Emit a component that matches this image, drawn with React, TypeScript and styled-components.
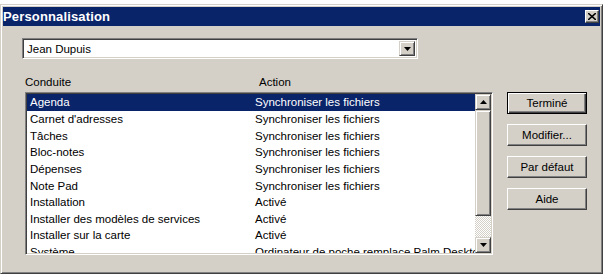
import React from "react";
import styled, { createGlobalStyle } from "styled-components";

const GlobalStyle = createGlobalStyle`
  html, body {
    margin: 0;
    padding: 0;
    background: #ffffff;
  }
  body {
    font-family: "Liberation Sans", Arial, sans-serif;
    font-size: 11.5px;
    color: #000;
  }
`;

const Window = styled.div`
  margin-top: 4px;
  width: 603px;
  height: 270px;
  box-sizing: border-box;
  background: #d4d0c8;
  border: 1px solid;
  border-color: #d4d0c8 #404040 #404040 #d4d0c8;
  box-shadow: inset 1px 1px #ffffff, inset -1px -1px #808080;
  padding: 2px;
  display: flex;
  flex-direction: column;
`;

const TitleBar = styled.div`
  height: 19px;
  background: #0a246a;
  display: flex;
  align-items: center;
  justify-content: space-between;
  padding: 0 1px 0 0;
`;

const Title = styled.span`
  color: #fff;
  font-weight: bold;
  font-size: 13px;
  letter-spacing: 0.15px;
`;

const CloseButton = styled.div`
  width: 12px;
  height: 11px;
  background: #d4d0c8;
  border: 1px solid;
  border-color: #ffffff #404040 #404040 #ffffff;
  box-shadow: inset -1px -1px #808080;
  display: flex;
  align-items: center;
  justify-content: center;
`;

const Content = styled.div`
  flex: 1;
  padding: 12px 0 0 19px;
  display: flex;
  flex-direction: column;
`;

const Sunken = styled.div`
  box-sizing: border-box;
  background: #fff;
  border: 1px solid;
  border-color: #808080 #ffffff #ffffff #808080;
  box-shadow: inset 1px 1px #404040, inset -1px -1px #d4d0c8;
  padding: 1px;
`;

const Combo = styled(Sunken)`
  width: 396px;
  height: 21px;
  display: flex;
  align-items: center;
  justify-content: space-between;
  padding: 2px 2px 2px 4px;
`;

const ArrowButton = styled.div<{ $h?: number }>`
  box-sizing: border-box;
  width: 16px;
  height: ${(p) => p.$h ?? 16}px;
  background: #d4d0c8;
  border: 1px solid;
  border-color: #d4d0c8 #404040 #404040 #d4d0c8;
  box-shadow: inset 1px 1px #ffffff, inset -1px -1px #808080;
  display: flex;
  align-items: center;
  justify-content: center;
  flex-shrink: 0;
`;

const Main = styled.div`
  display: flex;
  margin-top: 13px;
`;

const LeftColumn = styled.div`
  margin-left: 3px;
  width: 468px;
  display: flex;
  flex-direction: column;
`;

const Labels = styled.div`
  display: flex;
  height: 20px;
  align-items: center;
`;

const Label = styled.span<{ $w?: number }>`
  width: ${(p) => (p.$w ? `${p.$w}px` : "auto")};
`;

const ListBox = styled(Sunken)`
  height: 163px;
  display: flex;
`;

const Rows = styled.div`
  flex: 1;
  overflow: hidden;
  min-width: 0;
`;

const Row = styled.div<{ $selected?: boolean }>`
  height: 16.65px;
  display: flex;
  align-items: center;
  white-space: nowrap;
  background: ${(p) => (p.$selected ? "#0a246a" : "transparent")};
  color: ${(p) => (p.$selected ? "#fff" : "#000")};
`;

const Cell = styled.span<{ $w?: number }>`
  padding-left: 3px;
  width: ${(p) => (p.$w ? `${p.$w}px` : "auto")};
  flex-shrink: 0;
`;

const ScrollBar = styled.div`
  width: 16px;
  display: flex;
  flex-direction: column;
`;

const Thumb = styled.div`
  box-sizing: border-box;
  height: 106px;
  background: #d4d0c8;
  border: 1px solid;
  border-color: #d4d0c8 #404040 #404040 #d4d0c8;
  box-shadow: inset 1px 1px #ffffff, inset -1px -1px #808080;
`;

const Track = styled.div`
  flex: 1;
  background: repeating-conic-gradient(#d4d0c8 0 25%, #ffffff 0 50%) 0 0 / 2px 2px;
`;

const Buttons = styled.div`
  margin-left: 14px;
  margin-top: 20px;
  display: flex;
  flex-direction: column;
  gap: 10px;
`;

const Button = styled.div<{ $default?: boolean }>`
  box-sizing: border-box;
  width: 80px;
  height: 22px;
  background: #d4d0c8;
  display: flex;
  align-items: center;
  justify-content: center;
  border: 1px solid;
  border-color: ${(p) =>
    p.$default ? "#000" : "#ffffff #404040 #404040 #ffffff"};
  box-shadow: ${(p) =>
    p.$default
      ? "inset 1px 1px #ffffff, inset -1px -1px #404040, inset -2px -2px #808080"
      : "inset -1px -1px #808080"};
`;

const Triangle = ({ up }: { up?: boolean }) => (
  <svg width="7" height="4" viewBox="0 0 7 4">
    <path d={up ? "M3.5 0 L7 4 L0 4 Z" : "M0 0 L7 0 L3.5 4 Z"} fill="#000" />
  </svg>
);

const rows = [
  ["Agenda", "Synchroniser les fichiers"],
  ["Carnet d'adresses", "Synchroniser les fichiers"],
  ["Tâches", "Synchroniser les fichiers"],
  ["Bloc-notes", "Synchroniser les fichiers"],
  ["Dépenses", "Synchroniser les fichiers"],
  ["Note Pad", "Synchroniser les fichiers"],
  ["Installation", "Activé"],
  ["Installer des modèles de services", "Activé"],
  ["Installer sur la carte", "Activé"],
  ["Système", "Ordinateur de poche remplace Palm Desktop"],
];

const App = () => {
  return (
    <>
      <GlobalStyle />
      <Window>
        <TitleBar>
          <Title>Personnalisation</Title>
          <CloseButton>
            <svg width="8" height="7" viewBox="0 0 8 7">
              <path d="M0 0 L8 7 M8 0 L0 7" stroke="#000" strokeWidth="1.6" />
            </svg>
          </CloseButton>
        </TitleBar>
        <Content>
          <Combo>
            <span>Jean Dupuis</span>
            <ArrowButton $h={15}>
              <Triangle />
            </ArrowButton>
          </Combo>
          <Main>
            <LeftColumn>
              <Labels>
                <Label $w={234}>Conduite</Label>
                <Label>Action</Label>
              </Labels>
              <ListBox>
                <Rows>
                  {rows.map(([name, action], i) => (
                    <Row key={name} $selected={i === 0}>
                      <Cell $w={222}>{name}</Cell>
                      <Cell>{action}</Cell>
                    </Row>
                  ))}
                </Rows>
                <ScrollBar>
                  <ArrowButton>
                    <Triangle up />
                  </ArrowButton>
                  <Thumb />
                  <Track />
                  <ArrowButton>
                    <Triangle />
                  </ArrowButton>
                </ScrollBar>
              </ListBox>
            </LeftColumn>
            <Buttons>
              <Button $default>Terminé</Button>
              <Button>Modifier...</Button>
              <Button>Par défaut</Button>
              <Button>Aide</Button>
            </Buttons>
          </Main>
        </Content>
      </Window>
    </>
  );
};

export default App;
